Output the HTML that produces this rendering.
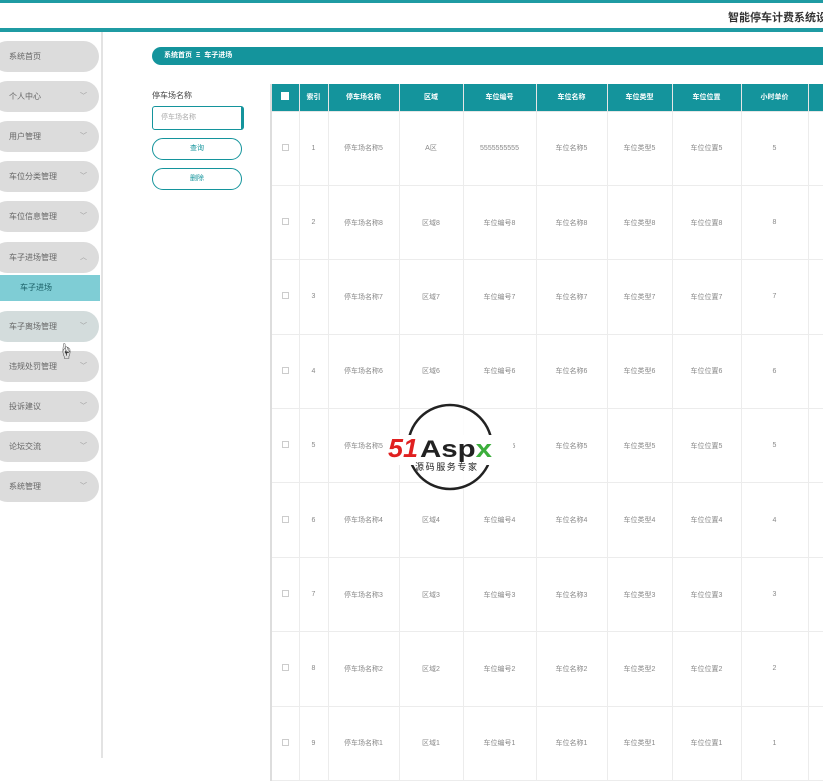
<!DOCTYPE html>
<html><head><meta charset="utf-8"><style>
*{margin:0;padding:0;box-sizing:border-box}
body{width:823px;height:758px;overflow:hidden;background:#fff;font-family:"Liberation Sans","Noto Sans CJK SC",sans-serif;position:relative;color:#666}
.a{position:absolute}
.pill{position:absolute;left:-8px;width:107px;height:31px;border-radius:16px;background:#dcdcdc;font-size:8px;color:#666;line-height:31px;padding-left:17px}
.pill i{position:absolute;right:12px;top:0;font-style:normal;font-size:7px;color:#999}
table{border-collapse:collapse;table-layout:fixed;position:absolute;left:270px;top:84px;width:600px;border-left:2px solid #ddd}
th{background:#14949c;color:#fff;font-size:7px;height:27px;border:1px solid #e6e6e6;border-top:none;font-weight:bold}
td{height:74.4px;border:1px solid #ececec;text-align:center;font-size:7px;color:#888}
.cb{display:inline-block;width:7px;height:7px;border:1px solid #ccc}
.ch{display:inline-block;width:8px;height:8px;background:#fff}
</style></head><body>
<div class="a" style="left:0;top:0;width:823px;height:3px;background:#1f9ba3"></div>
<div class="a" style="left:0;top:28px;width:823px;height:4px;background:#1f9ba3"></div>
<div class="a" style="left:728px;top:9px;font-size:11px;font-weight:bold;color:#333;white-space:nowrap">智能停车计费系统设</div>
<div class="a" style="left:101px;top:32px;width:2px;height:726px;background:#e3e3e3"></div>
<div class="pill" style="top:41px">系统首页</div>
<div class="pill" style="top:81px">个人中心<i>﹀</i></div>
<div class="pill" style="top:121px">用户管理<i>﹀</i></div>
<div class="pill" style="top:161px">车位分类管理<i>﹀</i></div>
<div class="pill" style="top:201px">车位信息管理<i>﹀</i></div>
<div class="pill" style="top:242px">车子进场管理<i>︿</i></div>
<div class="a" style="left:0;top:275px;width:100px;height:26px;background:#7fcdd5;font-size:8px;color:#1a5f66;line-height:26px;padding-left:20px">车子进场</div>
<div class="pill" style="top:311px;background:#d3dcdc">车子离场管理<i>﹀</i></div>
<div class="pill" style="top:351px">违规处罚管理<i>﹀</i></div>
<div class="pill" style="top:391px">投诉建议<i>﹀</i></div>
<div class="pill" style="top:431px">论坛交流<i>﹀</i></div>
<div class="pill" style="top:471px">系统管理<i>﹀</i></div>
<div class="a" style="left:58px;top:338px;font-size:16px;color:#333">☝</div>
<div class="a" style="left:152px;top:47px;width:680px;height:18px;background:#14949c;border-radius:9px 0 0 9px;color:#fff;font-size:7px;font-weight:bold;line-height:18px;padding-left:12px">系统首页 &nbsp;Ξ&nbsp; 车子进场</div>
<div class="a" style="left:152px;top:90px;font-size:8px;color:#444">停车场名称</div>
<div class="a" style="left:152px;top:106px;width:92px;height:24px;border:1px solid #14949c;border-right:3px solid #14949c;border-radius:3px;font-size:7px;color:#aaa;line-height:22px;padding-left:8px">停车场名称</div>
<div class="a" style="left:152px;top:138px;width:90px;height:22px;border:1px solid #14949c;border-radius:11px;font-size:7px;color:#14949c;text-align:center;line-height:20px">查询</div>
<div class="a" style="left:152px;top:168px;width:90px;height:22px;border:1px solid #14949c;border-radius:11px;font-size:7px;color:#14949c;text-align:center;line-height:20px">删除</div>
<table>
<colgroup><col style="width:28px"><col style="width:29px"><col style="width:71px"><col style="width:64px"><col style="width:73px"><col style="width:71px"><col style="width:65px"><col style="width:69px"><col style="width:67px"><col style="width:63px"></colgroup>
<tr><th><span class="ch"></span></th><th>索引</th><th>停车场名称</th><th>区域</th><th>车位编号</th><th>车位名称</th><th>车位类型</th><th>车位位置</th><th>小时单价</th><th></th></tr>
<tr><td><span class="cb"></span></td><td>1</td><td>停车场名称5</td><td>A区</td><td>5555555555</td><td>车位名称5</td><td>车位类型5</td><td>车位位置5</td><td>5</td><td></td></tr>
<tr><td><span class="cb"></span></td><td>2</td><td>停车场名称8</td><td>区域8</td><td>车位编号8</td><td>车位名称8</td><td>车位类型8</td><td>车位位置8</td><td>8</td><td></td></tr>
<tr><td><span class="cb"></span></td><td>3</td><td>停车场名称7</td><td>区域7</td><td>车位编号7</td><td>车位名称7</td><td>车位类型7</td><td>车位位置7</td><td>7</td><td></td></tr>
<tr><td><span class="cb"></span></td><td>4</td><td>停车场名称6</td><td>区域6</td><td>车位编号6</td><td>车位名称6</td><td>车位类型6</td><td>车位位置6</td><td>6</td><td></td></tr>
<tr><td><span class="cb"></span></td><td>5</td><td>停车场名称5</td><td>区域5</td><td>车位编号5</td><td>车位名称5</td><td>车位类型5</td><td>车位位置5</td><td>5</td><td></td></tr>
<tr><td><span class="cb"></span></td><td>6</td><td>停车场名称4</td><td>区域4</td><td>车位编号4</td><td>车位名称4</td><td>车位类型4</td><td>车位位置4</td><td>4</td><td></td></tr>
<tr><td><span class="cb"></span></td><td>7</td><td>停车场名称3</td><td>区域3</td><td>车位编号3</td><td>车位名称3</td><td>车位类型3</td><td>车位位置3</td><td>3</td><td></td></tr>
<tr><td><span class="cb"></span></td><td>8</td><td>停车场名称2</td><td>区域2</td><td>车位编号2</td><td>车位名称2</td><td>车位类型2</td><td>车位位置2</td><td>2</td><td></td></tr>
<tr><td><span class="cb"></span></td><td>9</td><td>停车场名称1</td><td>区域1</td><td>车位编号1</td><td>车位名称1</td><td>车位类型1</td><td>车位位置1</td><td>1</td><td></td></tr>
</table>
<svg class="a" style="left:385px;top:400px" width="130" height="95" viewBox="0 0 130 95">
<circle cx="65" cy="47" r="42" fill="#fff" fill-opacity="0.85" stroke="#222" stroke-width="2.5"/>
<rect x="2" y="35" width="126" height="30" fill="#fff"/>
<text x="3" y="57" font-family="Liberation Sans" font-weight="bold" font-style="italic" font-size="26" fill="#e02020" textLength="30" lengthAdjust="spacingAndGlyphs">51</text>
<text x="35" y="57" font-family="Liberation Sans" font-weight="bold" font-size="24" fill="#222" textLength="72" lengthAdjust="spacingAndGlyphs">Asp<tspan fill="#3cae3c">x</tspan></text>
<text x="30" y="70" font-family="Noto Sans CJK SC,sans-serif" font-size="9" fill="#222" textLength="62">源码服务专家</text>
</svg>
</body></html>
